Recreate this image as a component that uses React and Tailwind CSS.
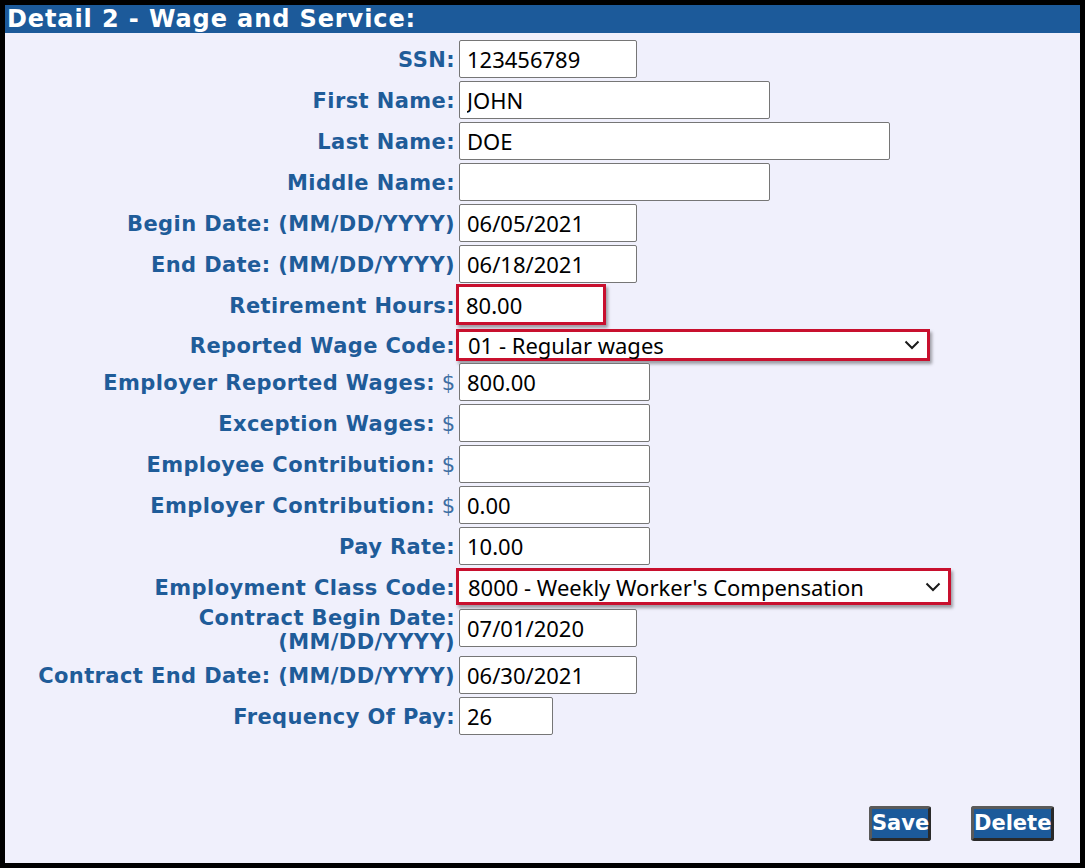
import React from "react";

const labelCls =
  "shrink-0 pt-[2px] text-right font-['DejaVu_Sans',sans-serif] font-bold text-[21px] tracking-[0.4px] leading-[24px] text-[#1f5c99]";
const inputCls =
  "h-[38px] rounded-[2px] border border-[#767676] bg-white pl-[7px] font-['Noto_Sans',sans-serif] text-[22px] text-black outline-none";

const Dollar = () => (
  <span className="font-normal tracking-normal text-[#3d6ea3]"> $</span>
);

const Field = ({ label, value = "", w, dollar, className = "mt-[3px]" }) => (
  <div className={`flex items-center ${className}`}>
    <div className={`${labelCls} w-[454px] pr-[4px]`}>
      {label}
      {dollar && <Dollar />}
    </div>
    <input readOnly value={value} className={`${inputCls} ${w}`} />
  </div>
);

const Chevron = () => (
  <svg width="16" height="10" viewBox="0 0 16 10" fill="none">
    <path d="M1.5 1.5 L8 8 L14.5 1.5" stroke="#1a1a1a" strokeWidth="2" />
  </svg>
);

const RedSelect = ({ label, value, w, h, className }) => (
  <div className={`flex items-center ${className}`}>
    <div className={`${labelCls} w-[451px] pr-[1px]`}>{label}</div>
    <div
      className={`${w} ${h} flex items-center justify-between border-[3px] border-[#c8102e] bg-white pl-[9px] pr-[7px] shadow-[2px_3px_3px_rgba(0,0,0,0.35)]`}
    >
      <span className="font-['Noto_Sans',sans-serif] text-[22px] leading-none text-black">
        {value}
      </span>
      <Chevron />
    </div>
  </div>
);

export default function App() {
  return (
    <div className="min-h-screen bg-black p-[5px] font-['DejaVu_Sans',sans-serif]">
      <div className="flex h-[858px] flex-col bg-[#f0f0fc]">
        {/* Header bar */}
        <div className="h-[28px] bg-[#1c5a9a] pl-[2px] text-[24px] font-bold tracking-[0.9px] leading-[28px] text-white">
          Detail 2 - Wage and Service:
        </div>

        <div className="flex flex-col pt-[7px]">
          <Field label="SSN:" value="123456789" w="w-[178px]" className="" />
          <Field label="First Name:" value="JOHN" w="w-[311px]" />
          <Field label="Last Name:" value="DOE" w="w-[431px]" />
          <Field label="Middle Name:" w="w-[311px]" />
          <Field label="Begin Date: (MM/DD/YYYY)" value="06/05/2021" w="w-[178px]" />
          <Field label="End Date: (MM/DD/YYYY)" value="06/18/2021" w="w-[178px]" />

          {/* Retirement Hours (highlighted) */}
          <div className="mt-[1px] flex items-center">
            <div className={`${labelCls} w-[451px] pr-[1px]`}>Retirement Hours:</div>
            <div className="flex h-[41px] w-[150px] items-center border-[3px] border-[#c8102e] bg-white pl-[7px] shadow-[2px_3px_3px_rgba(0,0,0,0.35)]">
              <span className="font-['Noto_Sans',sans-serif] text-[22px] leading-none text-black">
                80.00
              </span>
            </div>
          </div>

          <RedSelect
            label="Reported Wage Code:"
            value="01 - Regular wages"
            w="w-[474px]"
            h="h-[32px]"
            className="mt-[4px]"
          />

          <Field label="Employer Reported Wages:" value="800.00" w="w-[191px]" dollar className="mt-[2px]" />
          <Field label="Exception Wages:" w="w-[191px]" dollar />
          <Field label="Employee Contribution:" w="w-[191px]" dollar />
          <Field label="Employer Contribution:" value="0.00" w="w-[191px]" dollar />
          <Field label="Pay Rate:" value="10.00" w="w-[191px]" />

          <RedSelect
            label="Employment Class Code:"
            value="8000 - Weekly Worker's Compensation"
            w="w-[495px]"
            h="h-[37px]"
            className="mt-[3px]"
          />

          {/* Contract Begin Date (two-line label) */}
          <div className="mt-[4px] flex h-[47px] items-start">
            <div className={`${labelCls} w-[454px] pr-[4px] -mt-[5px]`}>
              Contract Begin Date:
              <br />
              (MM/DD/YYYY)
            </div>
            <input readOnly value="07/01/2020" className={`${inputCls} w-[178px]`} />
          </div>

          <Field label="Contract End Date: (MM/DD/YYYY)" value="06/30/2021" w="w-[178px]" className="" />
          <Field label="Frequency Of Pay:" value="26" w="w-[94px]" />
        </div>

        {/* Buttons */}
        <div className="mt-[71px] flex justify-end gap-[40px] pr-[26px]">
          <button className="h-[35px] w-[62px] rounded-[3px] border-[3px] border-[#5a5a5a] border-b-[#2a2a2a] border-r-[#2a2a2a] bg-[#1c5a9a] text-[21px] font-bold leading-none text-white">
            Save
          </button>
          <button className="h-[35px] w-[83px] rounded-[3px] border-[3px] border-[#5a5a5a] border-b-[#2a2a2a] border-r-[#2a2a2a] bg-[#1c5a9a] text-[21px] font-bold leading-none text-white">
            Delete
          </button>
        </div>
      </div>
    </div>
  );
}
